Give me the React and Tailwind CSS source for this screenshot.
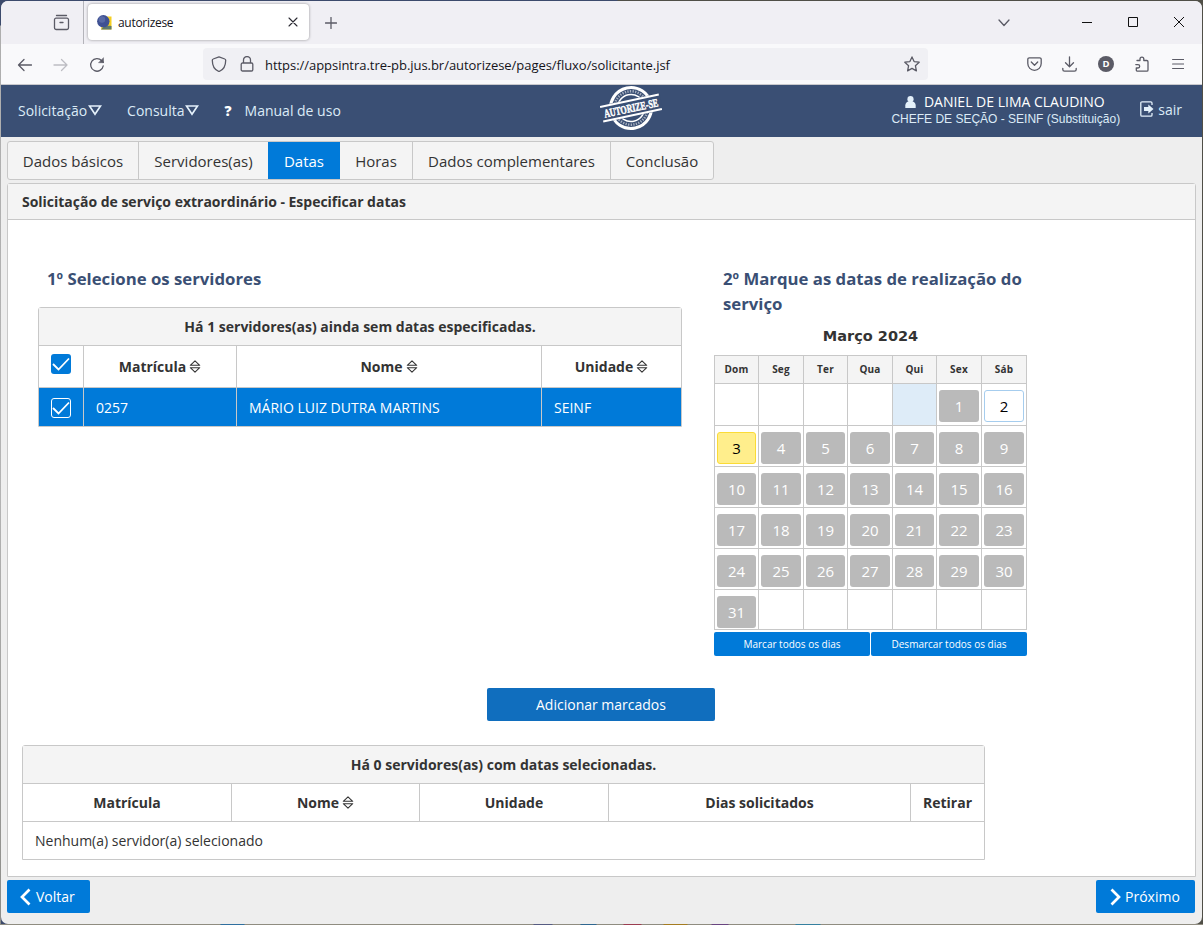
import React from "react";

const stroke = { fill: "none", stroke: "#5b5b66", strokeWidth: 1.3, strokeLinecap: "round", strokeLinejoin: "round" };

function Icon({ w = 16, h = 16, className = "", children, ...rest }) {
  return (
    <svg width={w} height={h} viewBox={`0 0 ${w} ${h}`} className={`block shrink-0 ${className}`} {...stroke} {...rest}>
      {children}
    </svg>
  );
}

function TabStrip() {
  return (
    <div className="flex h-[43px] shrink-0 bg-[#f0eff4]">
      <div className="flex w-[83px] shrink-0 justify-end border-r border-[#b4b4ba] pt-[13px] pr-[13px]">
        <Icon w={17} h={17}>
          <path d="M3.500 1.500h10" />
          <path d="M1.500 5.700a1.500 1.500 0 0 1 1.500-1.500h11a1.500 1.500 0 0 1 1.500 1.500v8a1.800 1.800 0 0 1-1.800 1.800H3.300a1.800 1.800 0 0 1-1.800-1.800z M7 8.500h3" />
        </Icon>
      </div>
      <div className="mt-[3px] ml-[4px] flex h-[36px] w-[221px] shrink-0 items-center rounded-[4px] bg-white pr-[11px] pl-[9px] shadow-[0_0_3px_rgba(0,0,0,0.4)]">
        <svg width="15" height="15" viewBox="0 0 15 15" className="block">
          <path d="M6 1.500h8.500v13H4z" fill="#f5cf22" />
          <path d="M4 14.500c3-4 6-4 10.500-3.500v3.500z" fill="#5f7a6d" />
          <circle cx="6.300" cy="6.300" r="6.200" fill="#3f5193" />
          <circle cx="5" cy="4.500" r="3.200" fill="#6474ae" opacity="0.700" />
        </svg>
        <span className="mt-[2px] ml-[6px] text-[12px] tracking-[-0.5px] text-[#15141a]" style={{ letterSpacing: "-0.3px" }}>autorizese</span>
        <Icon w={10} h={10} className="ml-auto" stroke="#2b2a33" strokeWidth="1.100">
          <path d="M1 1l8 8M9 1l-8 8" />
        </Icon>
      </div>
      <Icon w={12} h={12} className="mt-[16px] ml-[16px]">
        <path d="M6 .5v11M.5 6h11" />
      </Icon>
      <div className="ml-auto flex pt-[14px] pr-[17px]">
        <Icon w={12} h={8} className="mt-[4px]"><path d="M1 1l5 5.500L11 1" /></Icon>
        <svg width="12" height="14" className="ml-[71px] block"><path d="M1 7.500h10" stroke="#111" /></svg>
        <svg width="12" height="14" className="ml-[34px] block"><path d="M1.500 2.500h9v9h-9z" stroke="#111" fill="none" /></svg>
        <svg width="12" height="14" className="ml-[34px] block"><path d="M1 2l10 10M11 2L1 12" stroke="#111" /></svg>
      </div>
    </div>
  );
}

function Toolbar() {
  return (
    <div className="flex h-[41px] shrink-0 items-center border-b border-[#c9c9cd] bg-[#f9f9fb] pl-[16px]">
      <Icon className="mt-px"><path d="M14.500 8H1.500M7 2.500L1.500 8L7 13.500" /></Icon>
      <Icon className="mt-px ml-[20px]" stroke="#bdbdc3"><path d="M1 8h13M8.500 2.500L14 8l-5.500 5.500" /></Icon>
      <Icon className="mt-px ml-[20px]">
        <path d="M14.200 9a6.300 6.300 0 1 1-1.500-5.300L14.300 5.200" />
        <path d="M14.500 1v4.700H9.800z" fill="#5b5b66" strokeWidth="0.500" />
      </Icon>
      <div className="ml-[98px] flex h-[32px] w-[725px] shrink-0 items-center rounded-[4px] bg-[#f0f0f4] pl-[8px]">
        <Icon><path d="M8 .8l5.800 2.200c.6.2.9.7.9 1.300C14.700 9.500 12.500 14 8 15.500C3.500 14 1.300 9.500 1.300 4.300c0-.6.3-1.100.9-1.300z" /></Icon>
        <Icon w={14} className="ml-[13px]">
          <path d="M3.500 7V4a3.500 3.500 0 0 1 7 0v3M2.500 7h9a1.300 1.300 0 0 1 1.300 1.300v5.400a1.300 1.300 0 0 1-1.300 1.300h-9a1.300 1.300 0 0 1-1.300-1.300V8.300A1.300 1.300 0 0 1 2.500 7z" />
        </Icon>
        <span className="mt-[3px] ml-[11px] text-[13px] tracking-[-0.04px] whitespace-nowrap text-[#15141a]">
          https://appsintra.tre-pb.jus.br/autorizese/pages/fluxo/solicitante.jsf
        </span>
        <Icon className="mr-[8px] ml-auto">
          <path d="M8 .9l2.100 4.700 5.100.6-3.800 3.500 1 5.200L8 12.400l-4.400 2.500 1-5.200L.8 6.200l5.100-.6z" />
        </Icon>
      </div>
      <div className="ml-auto flex items-center pr-[18px]">
        <Icon w={15} h={14}>
          <path d="M2.300.8h10.400A1.500 1.500 0 0 1 14.200 2.300v4.300a6.700 6.700 0 0 1-13.400 0V2.300A1.500 1.500 0 0 1 2.300.8zM4.300 5l3.200 3.200L10.700 5" />
        </Icon>
        <Icon w={15} className="ml-[20px]"><path d="M7.500.8v9.700M3.500 6.800l4 4 4-4M.8 12.300v1.200a1.700 1.700 0 0 0 1.700 1.700h10a1.700 1.700 0 0 0 1.700-1.700v-1.200" /></Icon>
        <span className="ml-[21px] flex size-[16px] items-center justify-center rounded-full bg-[#5b5b66] text-[9.500px] font-bold text-white">D</span>
        <Icon className="ml-[20px]">
          <path d="M3 4.500h3V3a1.900 1.900 0 0 1 3.800 0v1.500h3a1.200 1.200 0 0 1 1.200 1.200v8.200a1.200 1.200 0 0 1-1.200 1.200H3.500a1.200 1.200 0 0 1-1.200-1.200V12h1.700a1.700 1.700 0 0 0 0-3.400H1.800" />
        </Icon>
        <Icon w={12} h={14} className="ml-[22px]" strokeWidth="1.200"><path d="M.6 2.500h11M.6 7h11M.6 11.500h11" /></Icon>
      </div>
    </div>
  );
}

function Stamp() {
  return (
    <svg width="64" height="46" viewBox="0 0 64 46" className="block">
      <g transform="rotate(-12 32 23)" fill="none" stroke="#fff">
        <circle cx="32" cy="23" r="20.500" strokeWidth="3" />
        <circle cx="32" cy="23" r="13.500" strokeWidth="1.600" />
        <circle cx="32" cy="23" r="16.700" strokeWidth="2.500" strokeDasharray="1.300 1.300" opacity="0.550" />
        <rect x="1" y="14.500" width="62" height="17" fill="#3a4f74" stroke="none" />
        <path d="M2 15.500h60M2 30.500h60" strokeWidth="2" />
      </g>
      <text x="32" y="27" transform="rotate(-12 32 23)" textAnchor="middle" textLength="55" lengthAdjust="spacingAndGlyphs" fontFamily="Liberation Serif, serif" fontWeight="700" fontSize="11.500" fill="#fff" stroke="#fff" strokeWidth="0.500">AUTORIZE-SE</text>
    </svg>
  );
}

function MenuItem({ children }) {
  return (
    <span className="flex items-center">
      {children}
      <svg width="14" height="11" viewBox="0 0 14 11" className="ml-px block"><path d="M1.500 1h11L7 9.300z" fill="none" stroke="#e3f0fa" strokeWidth="1.700" /></svg>
    </span>
  );
}

function Header() {
  return (
    <header className="flex h-[52px] shrink-0 bg-[#3a4f74] text-[14px] text-[#dcebf7]">
      <nav className="flex h-[50px] w-[598px] shrink-0 items-center pl-[17px]">
        <MenuItem>Solicitação</MenuItem>
        <span className="w-[25px]" />
        <MenuItem>Consulta</MenuItem>
        <span className="ml-[25px] text-[14px] font-extrabold text-white">?</span>
        <span className="ml-[13px]">Manual de uso</span>
      </nav>
      <Stamp />
      <div className="ml-auto flex w-[229px] flex-col items-center pt-[7px]">
        <div className="mb-px flex h-[19px] items-center gap-[8px] pr-[2px] text-white">
          <svg width="11" height="12" viewBox="0 0 11 12" className="block" fill="#e3f0fa"><circle cx="5.500" cy="3.200" r="3.100" /><path d="M.3 12V9.500C.3 7.300 2 6 3 5.500h5c1 .5 2.700 1.800 2.700 4V12z" /></svg>
          <span className="whitespace-nowrap">DANIEL DE LIMA CLAUDINO</span>
        </div>
        <div className="h-[16px] font-['Liberation_Sans',sans-serif] text-[12px] leading-[14px] whitespace-nowrap">CHEFE DE SEÇÃO - SEINF (Substituição)</div>
      </div>
      <div className="ml-[20px] flex h-[48px] items-center pr-[20px]">
        <svg width="14" height="16" viewBox="0 0 14 16" className="mr-[4px] block" fill="none" stroke="#e3f0fa" strokeWidth="1.300">
          <path d="M12 4V2A1.200 1.200 0 0 0 10.800.8H2A1.200 1.200 0 0 0 .8 2v12A1.200 1.200 0 0 0 2 15.200h8.800a1.200 1.200 0 0 0 1.200-1.200v-2" />
          <path d="M4 6h4.300V3.500L13.500 8l-5.200 4.500V10H4z" fill="#e3f0fa" stroke="none" />
        </svg>
        sair
      </div>
    </header>
  );
}

function Steps() {
  const cell = "flex h-full items-center justify-center border-r border-[#c8c8c8] pt-px";
  return (
    <div className="ml-[6px] flex h-[39px] w-[707px] shrink-0 overflow-hidden rounded-[3px] border border-[#c8c8c8] bg-[#f4f4f4] text-[15px] text-[#333]">
      <div className={`${cell} w-[131px]`}>Dados básicos</div>
      <div className="flex w-[129px] items-center justify-center pt-px">Servidores(as)</div>
      <div className="-my-px flex w-[72px] items-center justify-center bg-[#007ad9] pt-px text-white">Datas</div>
      <div className={`${cell} w-[73px]`}>Horas</div>
      <div className={`${cell} w-[198px]`}>Dados complementares</div>
      <div className="flex flex-1 items-center justify-center pt-px">Conclusão</div>
    </div>
  );
}

function Sort() {
  return (
    <svg width="12" height="13" viewBox="0 0 12 13" className="-mt-px ml-[3px] block" fill="none" stroke="#333" strokeWidth="1.100" strokeLinejoin="round">
      <path d="M1.300 5.300L6 .8l4.700 4.500zM1.300 7.700L6 12.200l4.700-4.500z" />
    </svg>
  );
}

function Check({ outlined }) {
  return (
    <span className={`flex size-[20px] items-center justify-center rounded-[3px] bg-[#007ad9] ${outlined ? "border border-white" : ""}`}>
      <svg width="18" height="16" viewBox="0 0 18 16" className="block shrink-0"><path d="M1 8l5.500 5.500L17 2.500" fill="none" stroke="#fff" strokeWidth="1.800" /></svg>
    </span>
  );
}

function PendingTable() {
  const h = "flex items-center justify-center";
  return (
    <div className="ml-[30px] w-[644px] rounded-t-[3px] border border-[#c8c8c8] text-[14px] text-[#333]">
      <div className="flex h-[38px] items-center justify-center border-b border-[#c8c8c8] bg-[#f4f4f4] font-bold">Há 1 servidores(as) ainda sem datas especificadas.</div>
      <div className="grid h-[42px] grid-cols-[45px_153px_305px_139px] divide-x divide-[#c8c8c8] border-b border-[#c8c8c8] font-bold">
        <div className="flex justify-center pt-[8px]"><Check /></div>
        <div className={h}>Matrícula<Sort /></div>
        <div className={h}>Nome<Sort /></div>
        <div className={h}>Unidade<Sort /></div>
      </div>
      <div className="grid h-[38px] grid-cols-[45px_153px_305px_139px] divide-x divide-[#c8c8c8] bg-[#007ad9] text-[14px] text-white">
        <div className="flex items-center justify-center pt-[2px]"><Check outlined /></div>
        <div className="flex items-center pl-[12px]">0257</div>
        <div className="flex items-center pl-[12px]">MÁRIO LUIZ DUTRA MARTINS</div>
        <div className="flex items-center pl-[12px]">SEINF</div>
      </div>
    </div>
  );
}

const WEEKDAYS = ["Dom", "Seg", "Ter", "Qua", "Qui", "Sex", "Sáb"];
const WEEKS = Array.from({ length: 6 }, (_, w) =>
  Array.from({ length: 7 }, (_, d) => {
    const n = w * 7 + d - 4;
    return n >= 1 && n <= 31 ? n : null;
  })
);

function dayStyle(n) {
  if (n === 2) return "border border-[#a6cdee] bg-white text-black";
  if (n === 3) return "border border-[#fbdb36] bg-[#ffee8c] text-black";
  return "bg-[#bababa] text-white";
}

const ROWS = ["h-[42px]", "h-[41px]", "h-[41px]", "h-[41px]", "h-[41px]", "h-[39px]"];
const COLS = "grid grid-cols-[44px_45px_44px_45px_44px_45px_44px] divide-x divide-[#c8c8c8]";

function Calendar() {
  return (
    <div className="w-[313px]">
      <div className="flex h-[38px] items-center justify-center pt-px [font-family:'DejaVu_Sans',Verdana,sans-serif] text-[14.500px] font-bold text-[#333]">Março 2024</div>
      <div className="border border-[#c8c8c8]">
        <div className={`${COLS} h-[28px] border-b border-[#c8c8c8] bg-[#f4f4f4] text-[10px] font-bold text-[#333]`}>
          {WEEKDAYS.map((d) => <div key={d} className="flex items-center justify-center tracking-[0.2px]">{d}</div>)}
        </div>
        {WEEKS.map((week, w) => (
          <div key={w} className={`${COLS} ${ROWS[w]} ${w < 5 ? "border-b border-[#c8c8c8]" : ""}`}>
            {week.map((n, d) => (
              <div key={d} className={`px-[2px] pt-[6px] ${w === 0 && d === 4 ? "bg-[#deecf8]" : ""}`}>
                {n && <div className={`flex h-[32px] items-center justify-center rounded-[3px] text-[15px] ${dayStyle(n)}`}>{n}</div>}
              </div>
            ))}
          </div>
        ))}
      </div>
      <div className="mt-[2px] flex gap-px text-[10px] text-white">
        <button className="h-[24px] flex-1 rounded-[2px] bg-[#007ad9]">Marcar todos os dias</button>
        <button className="h-[24px] flex-1 rounded-[2px] bg-[#007ad9]">Desmarcar todos os dias</button>
      </div>
    </div>
  );
}

function SelectedTable() {
  const c = "flex items-center justify-center";
  return (
    <div className="mt-[24px] ml-[14px] w-[963px] rounded-t-[3px] border border-[#c8c8c8] text-[14px] text-[#333]">
      <div className="flex h-[38px] items-center justify-center border-b border-[#c8c8c8] bg-[#f4f4f4] font-bold">Há 0 servidores(as) com datas selecionadas.</div>
      <div className="grid h-[38px] grid-cols-[209px_188px_189px_302px_73px] divide-x divide-[#c8c8c8] border-b border-[#c8c8c8] font-bold">
        <div className={c}>Matrícula</div>
        <div className={c}>Nome<Sort /></div>
        <div className={c}>Unidade</div>
        <div className={c}>Dias solicitados</div>
        <div className={c}>Retirar</div>
      </div>
      <div className="flex h-[37px] items-center pl-[12px]">Nenhum(a) servidor(a) selecionado</div>
    </div>
  );
}

export default function App() {
  return (
    <div className="flex h-[925px] w-[1203px] overflow-hidden bg-[linear-gradient(to_bottom,#3c4a6c_0,#3c4a6c_25px,#aeaeae_26px,#b4b4b4_500px,#8c8c88_925px)] pl-px font-['Open_Sans',sans-serif]">
      <div className="flex h-[925px] w-[1202px] flex-col bg-[linear-gradient(to_right,#3c4a6c_0,#3c4a6c_616px,#504f47_617px)] pt-px">
        <div className="flex h-[923px] w-[1201px] flex-col overflow-hidden rounded-[7px] bg-[#eeeeee]">
          <TabStrip />
          <Toolbar />
          <Header />
          <div className="h-[4px] shrink-0" />
          <Steps />
          <main className="mt-[3px] ml-[6px] flex h-[694px] w-[1189px] shrink-0 flex-col rounded-t-[3px] border border-[#c8c8c8] bg-white">
            <h1 className="flex h-[36px] shrink-0 items-center border-b border-[#c8c8c8] bg-[#f4f4f4] pl-[14px] text-[14px] font-bold tracking-[-0.015px] text-[#333]">
              Solicitação de serviço extraordinário - Especificar datas
            </h1>
            <div className="flex h-[468px] shrink-0 pt-[46px]">
              <section className="w-[706px] shrink-0">
                <h2 className="mb-[16px] pl-[39px] text-[16.750px] leading-[25px] font-bold text-[#3a4f74]">1º Selecione os servidores</h2>
                <PendingTable />
              </section>
              <section className="w-[330px]">
                <h2 className="mb-px pl-[9px] text-[16.750px] leading-[25px] font-bold text-[#3a4f74]">2º Marque as datas de realização do serviço</h2>
                <Calendar />
              </section>
            </div>
            <button className="ml-[479px] h-[33px] w-[228px] shrink-0 rounded-[2px] bg-[#106ebe] text-[14px] text-white">Adicionar marcados</button>
            <SelectedTable />
          </main>
          <footer className="mt-[3px] flex shrink-0 justify-between pr-[7px] pl-[6px] text-[14px] text-white">
            <button className="flex h-[33px] w-[83px] items-center rounded-[2px] bg-[#007ad9] pl-[12px]">
              <svg width="12" height="18" viewBox="0 0 12 18" className="mr-[5px] block"><path d="M10.500 1.500L3 9l7.500 7.500" fill="none" stroke="#fff" strokeWidth="2.700" /></svg>
              Voltar
            </button>
            <button className="flex h-[33px] w-[99px] items-center rounded-[2px] bg-[#007ad9] pl-[14px]">
              <svg width="11" height="18" viewBox="0 0 11 18" className="mr-[4px] block"><path d="M1.500 1.500L9 9l-7.500 7.500" fill="none" stroke="#fff" strokeWidth="2.700" /></svg>
              Próximo
            </button>
          </footer>
        </div>
        <div className="h-px bg-[linear-gradient(to_right,#8f8c80_0,#8f8c80_219px,#2f6f9f_220px,#2f6f9f_243px,#8f8c80_244px,#8f8c80_532px,#565c82_533px,#565c82_551px,#8f8c80_552px,#8f8c80_579px,#2f6790_580px,#2f6790_595px,#8f8c80_596px,#8f8c80_622px,#9b3d50_623px,#9b3d50_640px,#8f8c80_641px,#8f8c80_662px,#a57c20_663px,#a57c20_686px,#8f8c80_687px,#8f8c80_710px,#694580_711px,#694580_727px,#8f8c80_728px,#8f8c80_794px,#35809f_795px,#35809f_819px,#8f8c80_820px)]" />
      </div>
    </div>
  );
}
